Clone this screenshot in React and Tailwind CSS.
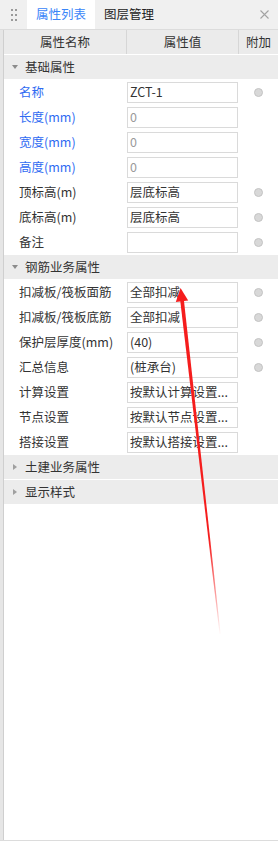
import React from 'react';

const basic = [
    { label: '名称', value: 'ZCT-1', blue: true, dot: true },
    { label: '长度(mm)', value: '0', blue: true, muted: true },
    { label: '宽度(mm)', value: '0', blue: true, muted: true },
    { label: '高度(mm)', value: '0', blue: true, muted: true },
    { label: '顶标高(m)', value: '层底标高', dot: true },
    { label: '底标高(m)', value: '层底标高', dot: true },
    { label: '备注', value: '', dot: true },
];

const rebar = [
    { label: '扣减板/筏板面筋', value: '全部扣减', dot: true },
    { label: '扣减板/筏板底筋', value: '全部扣减', dot: true },
    { label: '保护层厚度(mm)', value: '(40)', dot: true },
    { label: '汇总信息', value: '(桩承台)', dot: true },
    { label: '计算设置', value: '按默认计算设置...' },
    { label: '节点设置', value: '按默认节点设置...' },
    { label: '搭接设置', value: '按默认搭接设置...' },
];

const Section = ({ title, open }) => (
    <div className="h-[25px] flex items-center bg-[#ececec] border-b border-white">
        <div className="w-[21px] flex justify-center">
            {open ? (
                <span className="w-0 h-0 border-l-[3px] border-r-[3px] border-t-[4px] border-l-transparent border-r-transparent border-t-[#8c8c8c]" />
            ) : (
                <span className="w-0 h-0 border-t-[3px] border-b-[3px] border-l-[4px] border-t-transparent border-b-transparent border-l-[#a0a0a0]" />
            )}
        </div>
        <span className="text-[12.5px] text-[#333]">{title}</span>
    </div>
);

const Row = ({ label, value, blue, muted, dot }) => (
    <div className="h-[25px] flex items-start">
        <div className={`w-[123px] pl-[15px] h-[25px] flex items-center text-[12.5px] whitespace-nowrap ${blue ? 'text-[#2f6bf2]' : 'text-[#333]'}`}>
            {label}
        </div>
        <div className={`mt-[2px] w-[111px] h-[21px] border border-[#dadada] bg-white flex items-center pl-[2px] text-[12.5px] whitespace-nowrap overflow-hidden ${muted ? 'text-[#9a9a9a]' : 'text-[#333]'}`}>
            {value}
        </div>
        <div className="flex-1 h-[25px] flex items-center justify-center">
            {dot && <span className="w-[9px] h-[9px] rounded-full bg-[#d8d8d8] border border-[#c4c4c4]" />}
        </div>
    </div>
);

export default function App() {
    return (
        <div className="relative w-[278px] h-[841px] bg-white overflow-hidden font-['Noto_Sans_CJK_SC',sans-serif] border-b border-[#dcdcdc]">
            {/* Tabs */}
            <div className="h-[30px] flex bg-[#f0f0f0] border-b border-[#dcdcdc]">
                <div className="w-[27px] flex items-center justify-center">
                    <div className="grid grid-cols-2 gap-x-[2px] gap-y-[3px]">
                        {[0, 1, 2, 3, 4, 5].map(i => (
                            <span key={i} className="w-[2px] h-[2px] bg-[#9a9a9a]" />
                        ))}
                    </div>
                </div>
                <div className="w-[68px] bg-white flex items-center justify-center text-[12.5px] text-[#3a86f8]">属性列表</div>
                <div className="w-[68px] flex items-center justify-center text-[12.5px] text-[#222]">图层管理</div>
                <div className="flex-1 flex items-center justify-end pr-[9px]">
                    <svg width="9" height="9" viewBox="0 0 9 9">
                        <path d="M0.5 0.5 L8.5 8.5 M8.5 0.5 L0.5 8.5" stroke="#a3a3a3" strokeWidth="1.1" />
                    </svg>
                </div>
            </div>

            <div className="flex h-[811px]">
                <div className="w-[3px] bg-[#e6e6e6] border-r border-[#cfcfcf] box-content" />
                <div className="flex-1">
                    {/* Header */}
                    <div className="h-[25px] flex bg-[#ebebeb] border-b border-white text-[12.5px] text-[#333]">
                        <div className="w-[123px] flex items-center justify-center border-r border-[#d6d6d6]">属性名称</div>
                        <div className="w-[112px] flex items-center justify-center border-r border-[#d6d6d6]">属性值</div>
                        <div className="flex-1 flex items-center justify-center">附加</div>
                    </div>

                    <Section title="基础属性" open />
                    {basic.map(r => <Row key={r.label} {...r} />)}
                    <Section title="钢筋业务属性" open />
                    {rebar.map(r => <Row key={r.label} {...r} />)}
                    <Section title="土建业务属性" />
                    <Section title="显示样式" />
                </div>
            </div>

            {/* annotation arrow */}
            <svg className="absolute inset-0 pointer-events-none" width="278" height="841">
                <defs>
                    <linearGradient id="fade" gradientUnits="userSpaceOnUse" x1="0" y1="290" x2="0" y2="636">
                        <stop offset="0.72" stopColor="#f51d1d" stopOpacity="1" />
                        <stop offset="1" stopColor="#f51d1d" stopOpacity="0" />
                    </linearGradient>
                </defs>
                <polygon points="180.2,300.5 183.9,300 220.6,634 219.6,634" fill="url(#fade)" />
                <polygon points="180.5,288 175.8,302 188.2,300.6" fill="#f51d1d" />
            </svg>
        </div>
    );
}
